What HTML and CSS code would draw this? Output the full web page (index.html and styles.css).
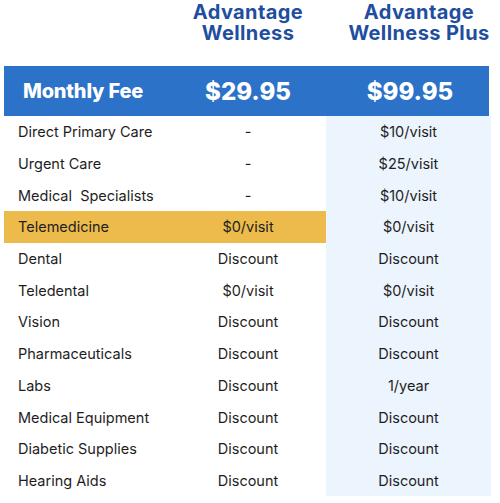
FILE: index.html
```html
<!DOCTYPE html>
<html>
<head>
<meta charset="utf-8">
<link rel="stylesheet" href="styles.css">
</head>
<body>
<div class="page">
  <div class="heads">
    <div class="head head-1"><div>Advantage</div><div>Wellness</div></div>
    <div class="head head-2"><div>Advantage</div><div>Wellness Plus</div></div>
  </div>
  <div class="table">
    <div class="fee">
      <div class="fee-label">Monthly Fee</div>
      <div class="fee-val c2">$29.95</div>
      <div class="fee-val c3">$99.95</div>
    </div>
    <div class="rows">
      <div class="row"><span class="lbl">Direct Primary Care</span><span class="c2">-</span><span class="c3">$10/visit</span></div>
      <div class="row"><span class="lbl">Urgent Care</span><span class="c2">-</span><span class="c3">$25/visit</span></div>
      <div class="row"><span class="lbl">Medical&nbsp; Specialists</span><span class="c2">-</span><span class="c3">$10/visit</span></div>
      <div class="row hl"><span class="lbl">Telemedicine</span><span class="c2">$0/visit</span><span class="c3">$0/visit</span></div>
      <div class="row"><span class="lbl">Dental</span><span class="c2">Discount</span><span class="c3">Discount</span></div>
      <div class="row"><span class="lbl">Teledental</span><span class="c2">$0/visit</span><span class="c3">$0/visit</span></div>
      <div class="row"><span class="lbl">Vision</span><span class="c2">Discount</span><span class="c3">Discount</span></div>
      <div class="row"><span class="lbl">Pharmaceuticals</span><span class="c2">Discount</span><span class="c3">Discount</span></div>
      <div class="row"><span class="lbl">Labs</span><span class="c2">Discount</span><span class="c3">1/year</span></div>
      <div class="row"><span class="lbl">Medical Equipment</span><span class="c2">Discount</span><span class="c3">Discount</span></div>
      <div class="row"><span class="lbl">Diabetic Supplies</span><span class="c2">Discount</span><span class="c3">Discount</span></div>
      <div class="row"><span class="lbl">Hearing Aids</span><span class="c2">Discount</span><span class="c3">Discount</span></div>
    </div>
  </div>
</div>
</body>
</html>
```
FILE: styles.css
```css
html, body {
  margin: 0;
  padding: 0;
  background: #ffffff;
}
.page {
  width: 500px;
  height: 503px;
  padding-left: 4px;
  box-sizing: border-box;
  font-family: Inter, "Open Sans", sans-serif;
}
.heads {
  display: grid;
  grid-template-columns: 166px 156px 164px;
  height: 66px;
}
.head {
  font-family: Inter, sans-serif;
  font-weight: 700;
  font-size: 20px;
  line-height: 21px;
  letter-spacing: 0.4px;
  color: #1f4e9f;
  text-align: center;
  padding-top: 2px;
  display: flex;
  flex-direction: column;
  align-items: center;
}
.head-1 { grid-column: 2; }
.head-2 { grid-column: 3; padding-left: 22px; white-space: nowrap; }
.table {
  width: 487px;
}
.fee {
  display: grid;
  grid-template-columns: 166px 156px 164px;
  height: 50px;
  align-items: center;
  background: #2b72c8;
  color: #ffffff;
  font-family: Inter, sans-serif;
  font-weight: 800;
  width: 485px;
}
.fee-label {
  font-size: 20px;
  padding-left: 19px;
  letter-spacing: -0.2px;
}
.fee-val {
  font-size: 24px;
  text-align: center;
}
.fee .c3 { padding-left: 4px; }
.rows {
  display: grid;
  grid-template-columns: 166px 156px 165px;
  grid-auto-rows: 31.7px;
  background: linear-gradient(to right, transparent 322px, #ecf4fd 322px);
}
.row {
  display: contents;
}
.row span {
  display: flex;
  align-items: center;
  font-size: 14.5px;
  color: #1e1e1e;
}
.row .lbl {
  padding-left: 14px;
}
.row .c2, .row .c3 {
  justify-content: center;
}
.row.hl .lbl, .row.hl .c2 {
  background: #ecbb4b;
}
```
